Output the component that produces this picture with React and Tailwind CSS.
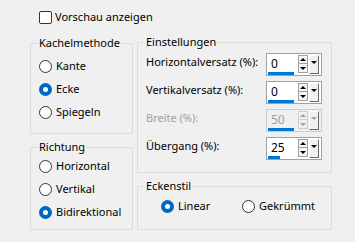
const font = { fontFamily: '"Noto Sans", "Liberation Sans", sans-serif' };

function Radio({ checked, label, className = '' }) {
  return (
    <div className={`flex items-center h-[23px] ${className}`}>
      {checked ? (
        <span className="w-[13px] h-[13px] rounded-full bg-[#0067c0] flex items-center justify-center shrink-0">
          <span className="w-[5px] h-[5px] rounded-full bg-white" />
        </span>
      ) : (
        <span className="w-[13px] h-[13px] rounded-full border border-[#333] bg-white shrink-0" />
      )}
      <span className="ml-[4px]">{label}</span>
    </div>
  );
}

function Group({ title, className = '', children }) {
  return (
    <div className={`border border-[#dcdcdc] ${className}`}>
      <span className="block w-fit -mt-[9px] ml-[7px] px-[1px] leading-[16px] bg-[#f0f0f0]">{title}</span>
      {children}
    </div>
  );
}

function Arrow({ up, disabled }) {
  const c = disabled ? 'border-[#a0a0a0]' : 'border-black';
  return up ? (
    <span className={`w-0 h-0 border-l-[3px] border-r-[3px] border-b-[3px] border-l-transparent border-r-transparent ${c} border-t-0`} />
  ) : (
    <span className={`w-0 h-0 border-l-[3px] border-r-[3px] border-t-[3px] border-l-transparent border-r-transparent ${c} border-b-0`} />
  );
}

function Spin({ value, bar, disabled }) {
  return (
    <div className={`w-[56px] h-[23px] shrink-0 border flex ${disabled ? 'border-[#cccccc] bg-[#f0f0f0]' : 'border-[#a0a0a0] bg-white'}`}>
      <div className="w-[31px] flex flex-col">
        <span className={`ml-[4px] mt-[1px] h-[17px] leading-[17px] text-[12px] ${disabled ? 'text-[#a0a0a0]' : 'text-black'}`}>{value}</span>
        <span className="ml-[1px] h-[3px] bg-[#0078d7]" style={{ width: bar }} />
      </div>
      <div className="mt-[1px] flex flex-col">
        <span className={`w-[10px] h-[9px] border flex items-center justify-center ${disabled ? 'border-[#d0d0d0]' : 'border-[#a0a0a0] bg-[#f4f4f4]'}`}>
          <Arrow up disabled={disabled} />
        </span>
        <span className={`w-[10px] h-[9px] border border-t-0 flex items-center justify-center ${disabled ? 'border-[#d0d0d0]' : 'border-[#a0a0a0] bg-[#f4f4f4]'}`}>
          <Arrow disabled={disabled} />
        </span>
      </div>
      <div className="mt-[1px] ml-[1px] w-[10px] h-[19px] border border-t-white border-l-white border-r-[#696969] border-b-[#696969] bg-[#f0f0f0] flex justify-center pt-[5px]">
        <Arrow disabled={disabled} />
      </div>
    </div>
  );
}

function Row({ label, value, bar, disabled }) {
  return (
    <div className="flex items-center justify-between pl-[8px] pr-[9px]">
      <span className={`-mt-[4px] whitespace-nowrap ${disabled ? 'text-[#a0a0a0]' : ''}`}>{label}</span>
      <Spin value={value} bar={bar} disabled={disabled} />
    </div>
  );
}

export default function App() {
  return (
    <div className="w-[355px] h-[242px] bg-[#f0f0f0] text-[11px] text-black flex flex-col pt-[8px]" style={font}>
      <div className="flex items-center h-[19px] ml-[39px]">
        <span className="w-[13px] h-[13px] border border-[#333] rounded-[2px] bg-white" />
        <span className="ml-[3px]">Vorschau anzeigen</span>
      </div>

      <div className="flex items-start mt-[15px] ml-[30px]">
        <div className="w-[103px] mt-[1px] flex flex-col">
          <Group title="Kachelmethode" className="h-[91px]">
            <div className="mt-[4px] ml-[8px]">
              <Radio label="Kante" />
              <Radio label="Ecke" checked />
              <Radio label="Spiegeln" />
            </div>
          </Group>
          <Group title="Richtung" className="h-[83px] mt-[13px]">
            <div className="ml-[8px]">
              <Radio label="Horizontal" />
              <Radio label="Vertikal" />
              <Radio label="Bidirektional" checked />
            </div>
          </Group>
        </div>

        <div className="w-[195px] ml-[4px] flex flex-col">
          <Group title="Einstellungen" className="h-[131px]">
            <div className="mt-[3px] flex flex-col gap-[5px]">
              <Row label="Horizontalversatz (%):" value="0" bar="26px" />
              <Row label="Vertikalversatz (%):" value="0" bar="26px" />
              <Row label="Breite (%):" value="50" bar="26px" disabled />
              <Row label="Übergang (%):" value="25" bar="12px" />
            </div>
          </Group>
          <Group title="Eckenstil" className="h-[44px] mt-[13px]">
            <div className="flex mt-[1px] ml-[23px]">
              <Radio label="Linear" checked className="w-[81px]" />
              <Radio label="Gekrümmt" />
            </div>
          </Group>
        </div>
      </div>
    </div>
  );
}
